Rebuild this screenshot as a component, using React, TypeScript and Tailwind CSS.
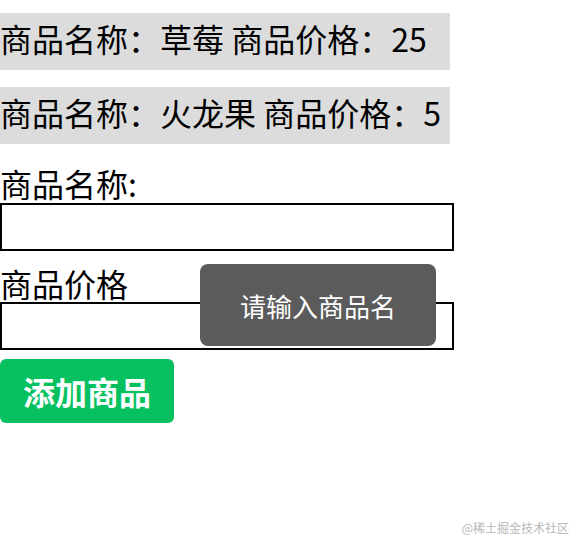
const goods = [
  { name: "草莓", price: 25 },
  { name: "火龙果", price: 5 },
];

const cjk = "font-['Microsoft_YaHei','Noto_Sans_CJK_SC',sans-serif]";

function GoodsRow({ name, price }: { name: string; price: number }) {
  return (
    <div className="w-[450px] h-[57px] bg-[#dcdcdc] text-[32px] leading-[50px] text-black whitespace-nowrap">
      商品名称：{name} 商品价格：{price}
    </div>
  );
}

export default function App() {
  return (
    <div className={`relative w-[574px] h-[542px] bg-white overflow-hidden ${cjk}`}>
      <div className="flex flex-col pt-[13px] gap-[17px]">
        {goods.map((g) => (
          <GoodsRow key={g.name} {...g} />
        ))}
      </div>

      <div className="flex flex-col">
        <label className="text-[32px] leading-[40px] mt-[19px] text-black">商品名称:</label>
        <input className="w-[454px] h-[48px] border-2 border-black outline-none" />
        <label className="text-[32px] leading-[40px] mt-[12px] text-black">商品价格</label>
        <input className="w-[454px] h-[48px] border-2 border-black outline-none -mt-[1px]" />
        <button className="mt-[9px] w-[174px] h-[64px] rounded-[6px] bg-[#07c160] text-white font-bold text-[32px] leading-none">
          添加商品
        </button>
      </div>

      <div className="absolute left-[200px] top-[264px] w-[236px] h-[82px] rounded-[8px] bg-[#5b5b5b] text-white text-[26px] flex items-center justify-center">
        请输入商品名
      </div>

      <div className="absolute right-[5px] bottom-[5px] text-[12px] text-[#b8b8b8]">
        @稀土掘金技术社区
      </div>
    </div>
  );
}
